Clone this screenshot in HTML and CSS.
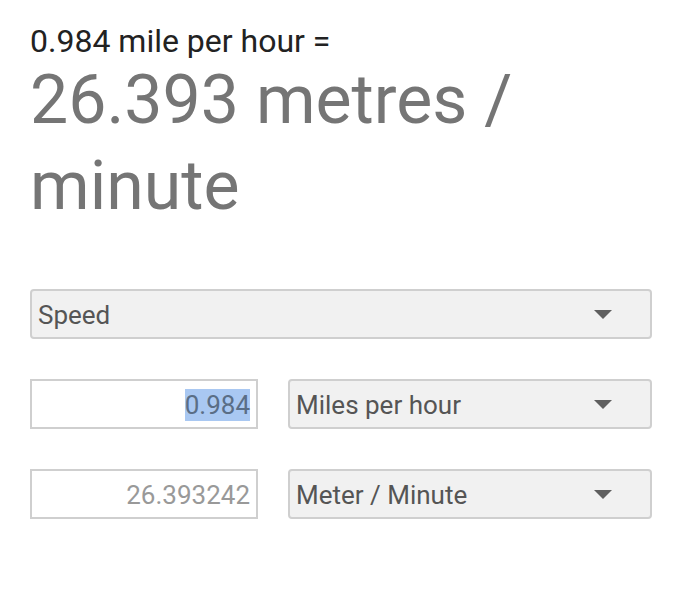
FILE: index.html
```html
<!DOCTYPE html>
<html>
<head>
<meta charset="utf-8">
<link rel="stylesheet" href="styles.css">
</head>
<body>
<div class="page">
  <div class="query">0.984 mile per hour =</div>
  <div class="result">26.393 metres / minute</div>
  <div class="form">
    <div class="select wide"><span>Speed</span><span class="arrow"></span></div>
    <div class="row">
      <div class="input"><span class="sel">0.984</span></div>
      <div class="select"><span>Miles per hour</span><span class="arrow"></span></div>
    </div>
    <div class="row">
      <div class="input muted">26.393242</div>
      <div class="select"><span>Meter / Minute</span><span class="arrow"></span></div>
    </div>
  </div>
</div>
</body>
</html>
```
FILE: styles.css
```css
html, body { margin: 0; padding: 0; background: #fff; }
body { font-family: Roboto, "Noto Sans", sans-serif; }
.page { padding: 25px 30px 0 30px; width: 622px; }
.query { font-size: 32px; line-height: 32px; color: #222; }
.result { font-size: 68px; line-height: 86px; color: #757575; width: 520px; }
.form { margin-top: 60px; display: flex; flex-direction: column; gap: 40px; }
.row { display: flex; gap: 30px; }
.select { box-sizing: border-box; height: 50px; flex: 1; background: #f1f1f1; border: 2px solid #cfcfcf; border-radius: 4px; display: flex; align-items: center; justify-content: space-between; padding: 2px 38px 0 6px; font-size: 26px; color: #555; }
.select.wide { flex: none; }
.arrow { width: 0; height: 0; border-left: 9px solid transparent; border-right: 9px solid transparent; border-top: 9px solid #5f5f5f; margin-top: -2px; }
.input { box-sizing: border-box; width: 228px; height: 50px; border: 2px solid #cfcfcf; background: #fff; display: flex; align-items: center; justify-content: flex-end; padding: 2px 6px 0 6px; font-size: 26px; color: #555; }
.input.muted { color: #999; }
.sel { background: #a9c8f2; color: #5a6e86; line-height: 32px; }
```
